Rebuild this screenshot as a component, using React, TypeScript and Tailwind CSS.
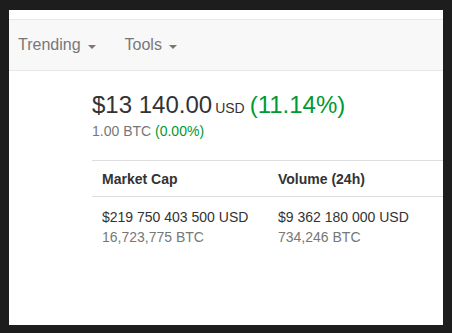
const navItems = ["Trending", "Tools"];

const stats = [
    { label: "Market Cap", usd: "$219 750 403 500 USD", btc: "16,723,775 BTC" },
    { label: "Volume (24h)", usd: "$9 362 180 000 USD", btc: "734,246 BTC" },
];

export default function App() {
    return (
        <div
            className="flex h-[333px] w-[452px] bg-[#1d1d1d] pb-[8px] pl-[9px] pr-[9px] pt-[10px]"
            style={{ fontFamily: '"Liberation Sans", Arial, sans-serif' }}
        >
            <div className="flex flex-1 flex-col bg-white">
                <nav className="mt-[9px] flex h-[52px] items-center border-y border-[#e7e7e7] bg-[#f8f8f8] pl-[9px]">
                    {navItems.map((item, i) => (
                        <div
                            key={item}
                            className={
                                "flex items-center text-[16px] leading-[20px] text-[#777] " +
                                (i > 0 ? "ml-[29px]" : "")
                            }
                        >
                            <span>{item}</span>
                            <span className="ml-[7px] mt-[3px] h-0 w-0 border-x-[4px] border-t-[4px] border-x-transparent border-t-[#777]" />
                        </div>
                    ))}
                </nav>

                <div className="ml-[83px] mt-[21px]">
                    <div className="text-[24px] leading-[26px] text-[#333]">
                        $13 140.00<span className="ml-[3px] text-[14px]">USD</span>
                        <span className="ml-[5px] text-[#009933]">(11.14%)</span>
                    </div>
                    <div className="text-[14px] leading-[20px] text-[#777]">
                        1.00 BTC <span className="text-[#009933]">(0.00%)</span>
                    </div>

                    <div className="mt-[19px] border-t border-[#ddd]">
                        <div className="grid grid-cols-[176px_1fr] border-b border-[#ddd]">
                            {stats.map((s) => (
                                <div
                                    key={s.label}
                                    className="px-[10px] pb-[7px] pt-[8px] text-[14px] font-bold leading-[20px] text-[#333]"
                                >
                                    {s.label}
                                </div>
                            ))}
                        </div>
                        <div className="grid grid-cols-[176px_1fr]">
                            {stats.map((s) => (
                                <div
                                    key={s.label}
                                    className="px-[10px] pt-[10px] text-[14px] leading-[20px]"
                                >
                                    <div className="text-[#333]">{s.usd}</div>
                                    <div className="text-[#777]">{s.btc}</div>
                                </div>
                            ))}
                        </div>
                    </div>
                </div>
            </div>
        </div>
    );
}
